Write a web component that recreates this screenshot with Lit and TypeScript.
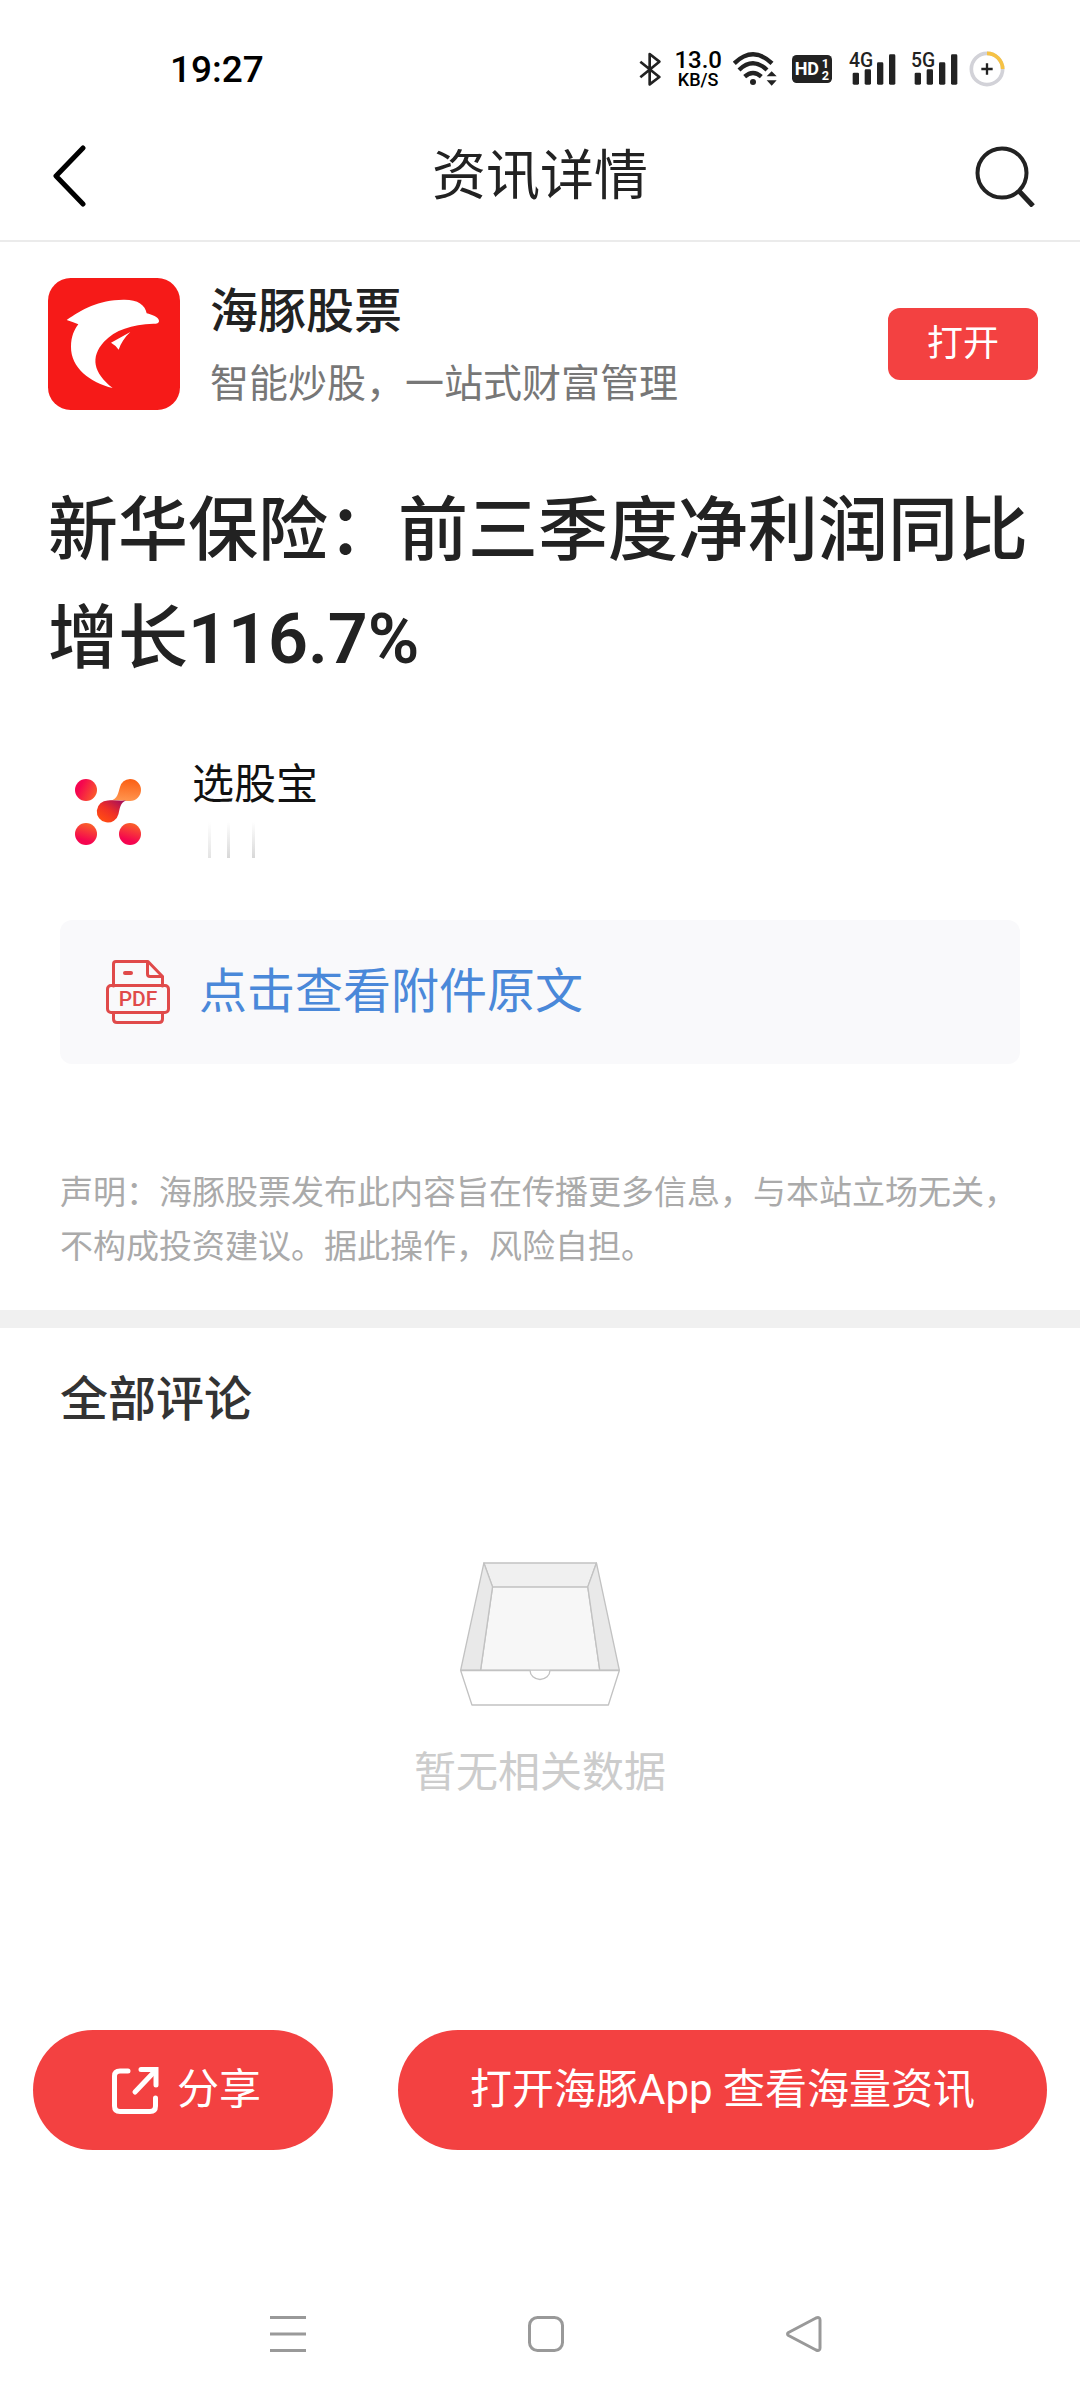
import { LitElement, html, css, svg } from "lit";
import { customElement, property } from "lit/decorators.js";

@customElement("signal-icon")
class SignalIcon extends LitElement {
  @property() label = "";

  static styles = css`
    :host { display: flex; }
    .signal { width: 47px; height: 42px; display: block; overflow: visible; }
    .generation { font-family: Roboto, "Liberation Sans", sans-serif; font-size: 58px; font-weight: 500; }
  `;

  render() {
    return html`<svg class="signal" viewBox="749 52 141 126" role="img" aria-label=${this.label}>
      ${[
        [760, 126],
        [796, 116],
        [833, 95],
        [869, 71],
      ].map(([x, y]) => svg`<rect x=${x} y=${y} width="19" height=${162 - y} rx="4" fill="#222" />`)}
      <text class="generation" x="749" y="109" fill="#222" stroke="#fff" stroke-width="8" paint-order="stroke">${this.label}</text>
    </svg>`;
  }
}

@customElement("status-bar")
class StatusBar extends LitElement {
  static styles = css`
    :host { display: block; }
    .bar {
      display: flex; align-items: center; justify-content: space-between;
      height: 106px; padding: 32px 75px 0 170px; box-sizing: border-box;
      font-family: Roboto, "Liberation Sans", sans-serif; color: #000;
    }
    .time { font-size: 37px; line-height: 42px; font-weight: 500; padding-top: 2px; }
    .icons { display: flex; align-items: center; gap: 11px; }
    .icons svg { display: block; height: 34px; }
    .bluetooth { width: 22px; }
    .wifi { width: 44px; }
    .hd { width: 40px; margin-left: 4px; }
    .battery { width: 36px; }
    .icons .battery { height: 36px; }
    .networks { display: flex; gap: 15px; padding-left: 6px; }
    .speed { display: flex; flex-direction: column; align-items: center; padding-left: 2px; font-weight: 500; }
    .rate { font-size: 24px; line-height: 22px; }
    .unit { font-size: 18px; line-height: 18px; }
    .hd-text { font-family: Roboto, "Liberation Sans", sans-serif; font-weight: 700; font-size: 54px; }
    .hd-digit { font-family: Roboto, "Liberation Sans", sans-serif; font-weight: 700; font-size: 38px; }
  `;

  render() {
    return html`<div class="bar">
      <time class="time">19:27</time>
      <div class="icons">
        <svg class="bluetooth" viewBox="112 65 66 102" aria-hidden="true">
          <path d="M116 94 L173 140 L144 162 V71 L173 94 L116 141" fill="none" stroke="#222" stroke-width="8" stroke-linejoin="round" />
        </svg>
        <div class="speed"><span class="rate">13.0</span><span class="unit">KB/S</span></div>
        <svg class="wifi" viewBox="397 64 132 102" aria-hidden="true">
          <g fill="none" stroke="#222" stroke-width="13">
            <path d="M401 98 Q457 44 514 98" />
            <path d="M415 118 Q457 78 499 118" />
            <path d="M432 138 Q457 116 482 138" />
          </g>
          <circle cx="457" cy="154" r="9" fill="#222" />
          <path d="M498 137 H528 L513 122Z M498 149 H528 L513 165Z" fill="#222" />
        </svg>
        <svg class="hd" viewBox="573 69 120 102" aria-hidden="true">
          <rect x="573" y="78" width="120" height="84" rx="14" fill="#222" />
          <text class="hd-text" x="581" y="139" fill="#fff">HD</text>
          <text class="hd-digit" x="662" y="117" fill="#fff">1</text>
          <text class="hd-digit" x="662" y="152" fill="#fff">2</text>
        </svg>
        <div class="networks">
          <signal-icon label="4G"></signal-icon>
          <signal-icon label="5G"></signal-icon>
        </div>
        <svg class="battery" viewBox="1109 61 108 108" aria-hidden="true">
          <circle cx="1163" cy="115" r="47" fill="none" stroke="#d2d2d8" stroke-width="11" />
          <path d="M1163 68 A47 47 0 0 1 1210 115" fill="none" stroke="#f6c244" stroke-width="11" />
          <path d="M1146 115 H1180 M1163 98 V132" stroke="#222" stroke-width="7" />
        </svg>
      </div>
    </div>`;
  }
}

@customElement("app-root")
class AppRoot extends LitElement {
  static styles = css`
    :host {
      display: block;
      --red: #f34141;
      font-family: Roboto, "Noto Sans CJK SC", sans-serif;
      color: #222;
      background: #fff;
    }
    .page { display: flex; flex-direction: column; min-height: 100vh; }
    h1, h2, h3, p { margin: 0; }
    svg { display: block; }
    button { border: 0; padding: 0; background: none; font: inherit; color: inherit; cursor: pointer; }
    a { text-decoration: none; color: inherit; }

    .header {
      display: flex; align-items: center; justify-content: space-between;
      height: 136px; padding: 4px 42px 0; box-sizing: border-box;
      border-bottom: 2px solid #ebebeb;
    }
    .header-title { font-size: 54px; line-height: 60px; font-weight: 400; padding-top: 4px; }
    .header-icon { width: 64px; height: 64px; }

    .promo { display: flex; align-items: center; padding: 36px 42px 0 48px; }
    .promo-logo { width: 132px; height: 132px; flex: none; }
    .promo-text { flex: 1; padding: 4px 0 0 30px; }
    .promo-name { font-size: 48px; line-height: 60px; font-weight: 500; }
    .promo-desc { font-size: 39px; line-height: 52px; margin-top: 16px; color: #777; }
    .open-button {
      width: 150px; height: 72px; border-radius: 12px;
      background: var(--red); color: #fff; font-size: 36px; line-height: 72px;
    }

    .headline { padding: 67px 46px 0 48px; font-size: 70px; line-height: 108px; font-weight: 500; }
    .figure { font-weight: 600; }

    .body { padding: 71px 60px 36px; }
    .author { display: flex; gap: 36px; }
    .avatar { width: 96px; height: 96px; flex: none; }
    .author-name { font-size: 42px; line-height: 42px; color: #111; }
    .date-strip { width: 140px; height: 36px; margin-top: 16px; }

    .attachment {
      display: flex; align-items: center; gap: 29px;
      margin-top: 60px; padding: 0 46px; height: 144px;
      background: #f9f9fb; border-radius: 12px;
      color: #4a88d9; font-size: 48px; line-height: 60px;
    }
    .pdf-icon { width: 64px; height: 64px; }
    .pdf-label { font-family: Roboto, sans-serif; font-size: 21px; font-weight: 500; }
    .disclaimer { margin-top: 102px; font-size: 33px; line-height: 54px; color: #aaa; }

    .comments { flex: 1; border-top: 18px solid #f0f0f0; padding: 42px 60px 0; }
    .comments-title { font-size: 48px; line-height: 60px; font-weight: 500; color: #333; }
    .empty { display: flex; flex-direction: column; align-items: center; gap: 46px; padding-top: 132px; }
    .empty-box { width: 160px; height: 144px; }
    .empty-text { font-size: 42px; line-height: 42px; color: #ccc; }

    .actions { display: flex; gap: 65px; padding: 0 33px; }
    .pill {
      display: flex; align-items: center; justify-content: center; gap: 18px;
      height: 120px; border-radius: 60px; background: var(--red); color: #fff;
      font-size: 42px; line-height: 60px;
    }
    .share { width: 300px; flex: none; padding-left: 6px; }
    .open-app { flex: 1; }
    .share-icon { width: 48px; height: 48px; }

    .nav { display: flex; height: 132px; margin-top: 118px; padding: 0 147px 0 159px; }
    .nav-button { flex: 1; display: flex; justify-content: center; }
    .nav-icon { width: 38px; height: 38px; margin-top: 47px; }
  `;

  render() {
    return html`<div class="page">
      <status-bar></status-bar>
      <header class="header">
        <button class="header-button" aria-label="返回">
          <svg class="header-icon" viewBox="0 0 64 64" fill="none" stroke="#000" stroke-width="5" stroke-linecap="round" stroke-linejoin="round">
            <path d="M41 5 L14 33 L41 61" />
          </svg>
        </button>
        <h1 class="header-title">资讯详情</h1>
        <button class="header-button" aria-label="搜索">
          <svg class="header-icon" viewBox="0 0 64 64" fill="none" stroke="#222">
            <circle cx="28" cy="30" r="24.5" stroke-width="4" />
            <path d="M45 48 L59 63" stroke-width="5" />
          </svg>
        </button>
      </header>

      <section class="promo">
        <svg class="promo-logo" viewBox="54 54 396 396" aria-hidden="true">
          <rect x="54" y="54" width="396" height="396" rx="68" fill="#f61a18" />
          <path fill="#fff" d="M110 180 C155 148 205 120 280 119 C322 118 346 134 350 160 C366 164 385 171 387 182 C387 190 381 191 370 191 C305 193 255 210 222 245 C180 292 190 338 248 384 C180 368 122 322 123 260 C123 230 133 208 145 193 C133 188 122 184 110 180Z" />
          <path fill="#fff" d="M301 216 L243 248 Q256 255 266 269 C272 250 284 232 301 216Z" />
        </svg>
        <div class="promo-text">
          <h3 class="promo-name">海豚股票</h3>
          <p class="promo-desc">智能炒股，一站式财富管理</p>
        </div>
        <button class="open-button">打开</button>
      </section>

      <h2 class="headline">新华保险：前三季度净利润同比增长<span class="figure">116.7%</span></h2>

      <section class="body">
        <div class="author">
          <svg class="avatar" viewBox="0 0 96 96" aria-hidden="true">
            <defs>
              <linearGradient id="pink" x1="0" y1="0.3" x2="1" y2="0.8"><stop offset="0.2" stop-color="#f5054f" /><stop offset="1" stop-color="#fb6128" /></linearGradient>
              <linearGradient id="rise" x1="0.7" y1="0" x2="0.4" y2="1"><stop offset="0" stop-color="#fa6427" /><stop offset="0.8" stop-color="#f5054f" /></linearGradient>
              <linearGradient id="orange" x1="0.5" y1="0" x2="0.4" y2="1"><stop offset="0" stop-color="#fb5f14" /><stop offset="1" stop-color="#ff9650" /></linearGradient>
              <linearGradient id="core" x1="1" y1="0" x2="0.2" y2="0.9"><stop offset="0.1" stop-color="#a80f58" /><stop offset="0.6" stop-color="#f03026" /><stop offset="1" stop-color="#ff4b14" /></linearGradient>
            </defs>
            <circle cx="26" cy="26" r="11" fill="url(#pink)" />
            <path fill="url(#orange)" d="M70 15 A11 11 0 0 1 70 37 C64 37 58 36 50 37 C58 35 58 29 60 23 A11 11 0 0 1 70 15Z" />
            <path fill="url(#core)" d="M48 36.500 C54 36 60 37 66 36.500 C60 39 60 44 58.500 50 A11 11 0 1 1 48 36.500Z" />
            <circle cx="26" cy="70" r="11" fill="url(#rise)" />
            <circle cx="70" cy="70" r="11" fill="url(#rise)" />
          </svg>
          <div class="author-text">
            <p class="author-name">选股宝</p>
            <svg class="date-strip" viewBox="0 0 140 36" aria-hidden="true">
              <defs>
                <linearGradient id="fade" x1="0" y1="0" x2="0" y2="1"><stop offset="0" stop-color="#fff" /><stop offset="1" stop-color="#d8d8d8" /></linearGradient>
              </defs>
              <rect x="16" width="3" height="36" fill="url(#fade)" opacity="0.7" />
              <rect x="35" width="3" height="36" fill="url(#fade)" />
              <rect x="60" width="3" height="36" fill="url(#fade)" />
            </svg>
          </div>
        </div>

        <a class="attachment" href="#">
          <svg class="pdf-icon" viewBox="0 0 64 64" fill="none" stroke="#e04a4a" stroke-width="3" stroke-linejoin="round" stroke-linecap="round" aria-hidden="true">
            <path d="M7.500 26 V4 Q7.500 1.500 10 1.500 H42 L56.500 16.500 V26" />
            <path d="M41.500 2 V14 Q41.500 16.500 44 16.500 H56" />
            <path d="M19 13 H25" stroke-width="4" />
            <rect x="1.500" y="25.500" width="61" height="27" rx="3.500" />
            <path d="M7.500 53 V59 Q7.500 62.500 11 62.500 H53 Q56.500 62.500 56.500 59 V53" />
            <text class="pdf-label" x="32" y="46" text-anchor="middle" fill="#e04a4a" stroke="none">PDF</text>
          </svg>
          <span class="attachment-text">点击查看附件原文</span>
        </a>

        <p class="disclaimer">声明：海豚股票发布此内容旨在传播更多信息，与本站立场无关，不构成投资建议。据此操作，风险自担。</p>
      </section>

      <section class="comments">
        <h3 class="comments-title">全部评论</h3>
        <div class="empty">
          <svg class="empty-box" viewBox="89 96 482 432" stroke="#c2c2c2" stroke-width="4" stroke-linejoin="round" aria-hidden="true">
            <path d="M187 170 H474 L510 421 H151Z" fill="#f7f7f7" />
            <path d="M161 98 H500 L474 170 H187Z" fill="#f0f0f0" />
            <path d="M161 98 L187 170 L151 421 H91Z" fill="#e9e9e9" />
            <path d="M500 98 L474 170 L510 421 H569Z" fill="#e9e9e9" />
            <path d="M91 422 H300 A30 27 0 0 0 360 422 H569 L536 526 H125Z" fill="#fff" />
          </svg>
          <p class="empty-text">暂无相关数据</p>
        </div>
      </section>

      <div class="actions">
        <button class="pill share">
          <svg class="share-icon" viewBox="0 0 48 48" fill="none" stroke="#fff" stroke-width="5" stroke-linecap="round" aria-hidden="true">
            <path d="M17 5 H9 Q3.500 5 3.500 10 V40 Q3.500 45.500 9 45.500 H39 Q44.500 45.500 44.500 40 V32" />
            <path d="M30 3.500 H45 V19" stroke-linejoin="miter" />
            <path d="M44 5 L24 26" />
          </svg>
          <span>分享</span>
        </button>
        <button class="pill open-app">打开海豚App 查看海量资讯</button>
      </div>

      <nav class="nav">
        <button class="nav-button" aria-label="最近任务">
          <svg class="nav-icon" viewBox="0 0 38 38" fill="none" stroke="#999" stroke-width="3"><path d="M1 2.500 H37 M1 19 H37 M1 35.500 H37" /></svg>
        </button>
        <button class="nav-button" aria-label="主屏幕">
          <svg class="nav-icon" viewBox="0 0 38 38" fill="none" stroke="#999" stroke-width="3"><rect x="2.500" y="2.500" width="33" height="33" rx="8" /></svg>
        </button>
        <button class="nav-button" aria-label="后退">
          <svg class="nav-icon" viewBox="0 0 38 38" fill="none" stroke="#999" stroke-width="3" stroke-linejoin="round"><path d="M3.500 17.500 L31 3 Q35 1.500 35 5 V33 Q35 36.500 31 35 L3.500 20.500 Q1.500 19 3.500 17.500Z" /></svg>
        </button>
      </nav>
    </div>`;
  }
}
